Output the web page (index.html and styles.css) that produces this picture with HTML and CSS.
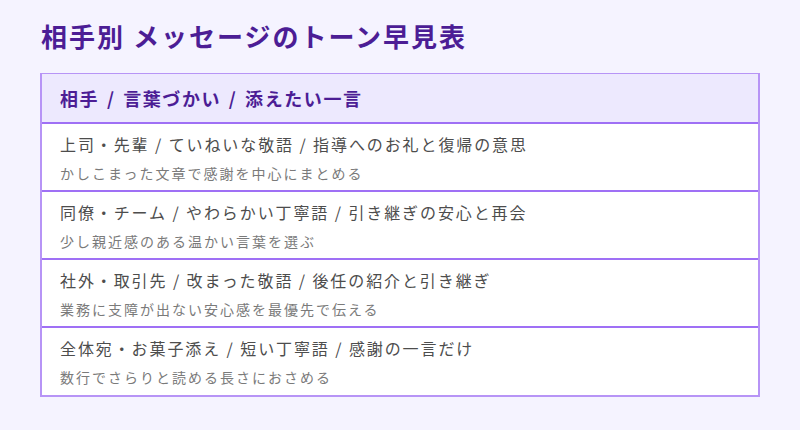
FILE: index.html
```html
<!DOCTYPE html>
<html lang="ja">
<head>
<meta charset="utf-8">
<link rel="stylesheet" href="styles.css">
</head>
<body>
<main class="page">
  <h1 class="title">相手別 メッセージのトーン早見表</h1>
  <section class="table">
    <div class="head">相手 / 言葉づかい / 添えたい一言</div>
    <div class="row">
      <div class="main">上司・先輩 / ていねいな敬語 / 指導へのお礼と復帰の意思</div>
      <div class="sub">かしこまった文章で感謝を中心にまとめる</div>
    </div>
    <div class="row">
      <div class="main">同僚・チーム / やわらかい丁寧語 / 引き継ぎの安心と再会</div>
      <div class="sub">少し親近感のある温かい言葉を選ぶ</div>
    </div>
    <div class="row">
      <div class="main">社外・取引先 / 改まった敬語 / 後任の紹介と引き継ぎ</div>
      <div class="sub">業務に支障が出ない安心感を最優先で伝える</div>
    </div>
    <div class="row">
      <div class="main">全体宛・お菓子添え / 短い丁寧語 / 感謝の一言だけ</div>
      <div class="sub">数行でさらりと読める長さにおさめる</div>
    </div>
  </section>
</main>
</body>
</html>
```
FILE: styles.css
```css
html, body {
  margin: 0;
  padding: 0;
  background: #f5f3ff;
}
body {
  font-family: "Noto Sans CJK JP", "Noto Sans", sans-serif;
  width: 800px;
  height: 430px;
  overflow: hidden;
}
.page {
  padding: 17px 40px 0 40px;
}
.title {
  margin: 0 0 19px 1px;
  font-size: 26px;
  line-height: 37px;
  font-weight: 700;
  color: #4c1d95;
  letter-spacing: 2px;
}
.table {
  width: 720px;
  box-sizing: border-box;
  border: 2px solid #b794f6;
  border-top-width: 1px;
  background: #ffffff;
}
.head {
  box-sizing: border-box;
  height: 50px;
  padding: 0 0 0 18px;
  display: flex;
  align-items: center;
  background: #ede9fe;
  color: #4c1d95;
  font-size: 18px;
  font-weight: 700;
  letter-spacing: 1.6px;
  word-spacing: 2px;
  border-bottom: 2px solid #9f70f5;
}
.row {
  box-sizing: border-box;
  height: 68px;
  padding: 8px 0 0 18px;
  border-bottom: 2px solid #9f70f5;
}
.row:last-child {
  border-bottom: none;
  height: 67px;
}
.main {
  font-size: 16px;
  line-height: 24px;
  color: #4d4d4d;
  letter-spacing: 1.9px;
}
.sub {
  margin-top: 7px;
  font-size: 14px;
  line-height: 20px;
  color: #7a7a7a;
  letter-spacing: 2px;
}
```
